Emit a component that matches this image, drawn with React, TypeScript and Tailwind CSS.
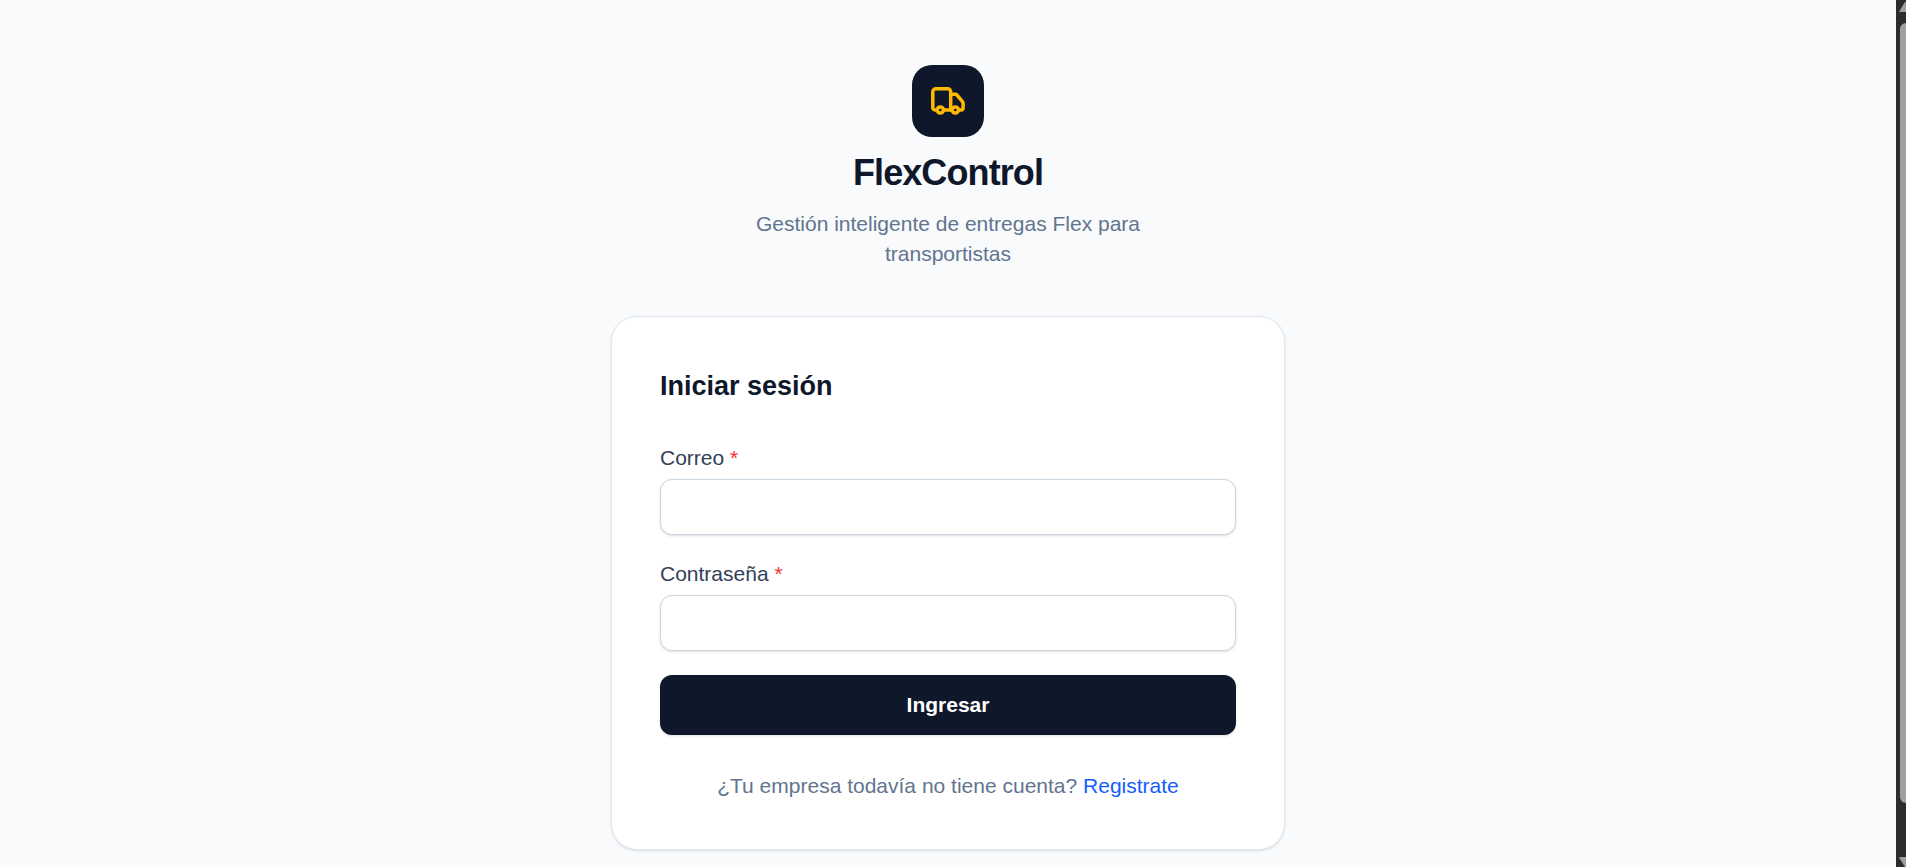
import type { ComponentProps } from "react";

function TruckIcon() {
  return (
    <svg
      viewBox="0 0 42 42"
      className="size-[42px] text-[#ffb900]"
      fill="none"
      stroke="currentColor"
      strokeWidth="3.5"
      strokeLinecap="round"
      strokeLinejoin="round"
      aria-hidden="true"
    >
      <path d="M9.500 30H8a2.200 2.200 0 0 1-2.200-2.200V11.800a3 3 0 0 1 3-3h11.900a3 3 0 0 1 3 3V30" />
      <path d="M24 14.300h4.400a2 2 0 0 1 1.500.700l5.600 6.700a2.400 2.400 0 0 1 .6 1.600v4.500a2.200 2.200 0 0 1-2.200 2.200H32" />
      <path d="M17 30h7.500" />
      <circle cx="13.300" cy="30" r="3.100" />
      <circle cx="28.300" cy="30" r="3.100" />
    </svg>
  );
}

function Field({ id, label, ...props }: { id: string; label: string } & ComponentProps<"input">) {
  return (
    <div>
      <label htmlFor={id} className="mb-1.5 block text-[21px] leading-[30px] text-[#314158]">
        {label} <span className="text-[#fb2c36]">*</span>
      </label>
      <input
        id={id}
        required
        className="block h-14 w-full rounded-xl border border-[#cad5e2] bg-white px-4 text-[21px] text-[#0f172b] shadow-sm outline-none focus:border-[#62748e]"
        {...props}
      />
    </div>
  );
}

function ScrollTrack() {
  return (
    <div className="flex w-[10px] shrink-0 flex-col overflow-hidden bg-[#2c2c2c]" aria-hidden="true">
      <svg viewBox="0 0 10 13" className="h-[13px] w-[10px] shrink-0" fill="#9f9f9f">
        <path d="M3.500 11 9 2h1v10H4q-1 0-.5-1z" />
      </svg>
      <div className="mt-[10px] ml-1 flex-1 rounded-l-md bg-[#9f9f9f]" />
      <svg viewBox="0 0 10 10" className="mt-[54px] h-[10px] w-[10px] shrink-0" fill="#9f9f9f">
        <path d="M4 0h6v10H9L3.500 1.500Q3 0 4 0z" />
      </svg>
    </div>
  );
}

export default function App() {
  return (
    <div className="flex min-h-screen bg-[#f8fafc] font-['Liberation_Sans',Arial,sans-serif]">
      <main className="flex flex-1 flex-col items-center pt-[65px] pb-4">
        <header className="flex w-full max-w-[432px] flex-col items-center text-center">
          <div className="flex size-[72px] items-center justify-center rounded-[20px] bg-[#0f172b]">
            <TruckIcon />
          </div>
          <h1 className="mt-3 text-[36px] leading-[48px] font-bold tracking-tight text-[#0f172b]">
            FlexControl
          </h1>
          <p className="mt-3 text-[21px] leading-[30px] text-[#62748e]">
            Gestión inteligente de entregas Flex para transportistas
          </p>
        </header>

        <section className="mt-[47px] w-full max-w-[674px] rounded-[26px] border border-[#e2e8f0] bg-white p-12 shadow-sm">
          <h2 className="text-[27px] leading-[42px] font-bold text-[#0f172b]">Iniciar sesión</h2>
          <form className="mt-9 flex flex-col gap-6" onSubmit={(e) => e.preventDefault()}>
            <Field id="correo" label="Correo" type="email" autoComplete="email" />
            <Field id="contrasena" label="Contraseña" type="password" autoComplete="current-password" />
            <button
              type="submit"
              className="h-[60px] w-full rounded-xl bg-[#0f172b] text-[21px] leading-[30px] font-bold text-white shadow-sm"
            >
              Ingresar
            </button>
          </form>
          <p className="mt-9 text-center text-[21px] leading-[30px] text-[#62748e]">
            ¿Tu empresa todavía no tiene cuenta?{" "}
            <a href="#registro" className="text-[#155dfc]">
              Registrate
            </a>
          </p>
        </section>
      </main>
      <ScrollTrack />
    </div>
  );
}
